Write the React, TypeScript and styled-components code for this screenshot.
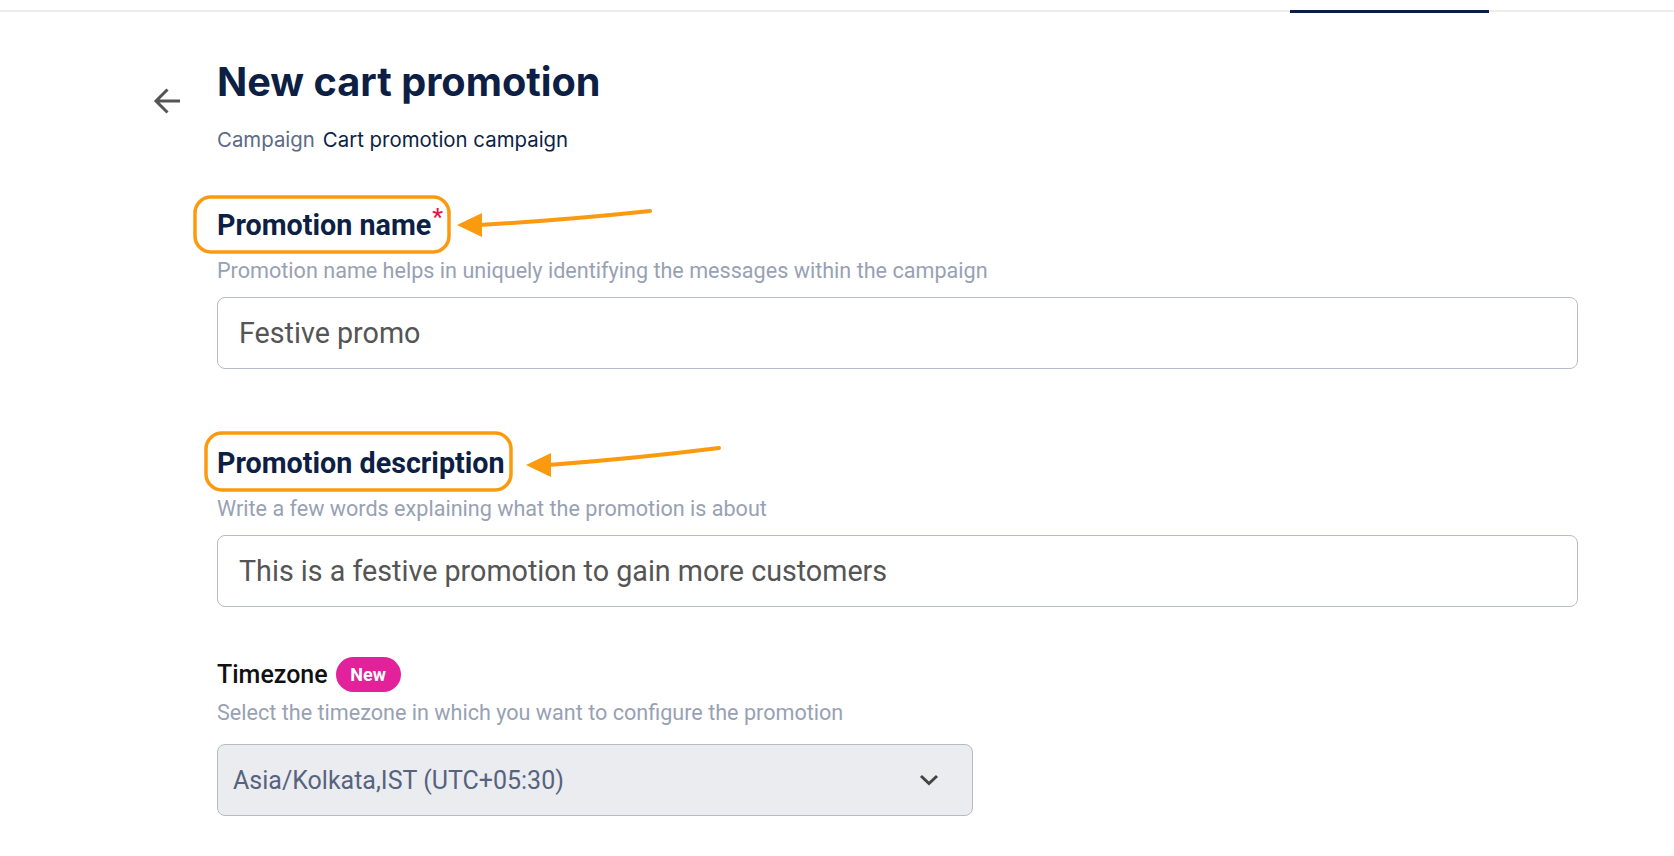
import React from 'react'
import styled, { createGlobalStyle } from 'styled-components'

const GlobalStyle = createGlobalStyle`
  html, body {
    margin: 0;
    padding: 0;
    background: #ffffff;
  }
  body {
    font-family: Roboto, 'Liberation Sans', sans-serif;
    color: #0e1f45;
  }
  * {
    box-sizing: border-box;
  }
`

const TabBar = styled.div`
  display: flex;
  height: 12px;
  border-bottom: 2px solid #ececec;
`
const TabIndicator = styled.div`
  margin-left: 1290px;
  width: 199px;
  height: 3px;
  margin-top: 10px;
  background: #0b1f45;
`

const Page = styled.div`
  display: flex;
  padding-left: 153px;
`
const BackColumn = styled.div`
  width: 64px;
  padding-top: 75px;
`
const BackButton = styled.button`
  display: flex;
  padding: 0;
  border: none;
  background: none;
  cursor: pointer;
  color: #555555;
`
const Content = styled.div`
  width: 1361px;
  display: flex;
  flex-direction: column;
  align-items: flex-start;
`
const Title = styled.h1`
  margin: 47px 0 0;
  font-family: Inter, Roboto, sans-serif;
  font-size: 39.7px;
  line-height: 46px;
  font-weight: 700;
  color: #0e1f45;
`
const Breadcrumb = styled.div`
  margin-top: 23px;
  display: flex;
  gap: 8px;
  font-family: Inter, Roboto, sans-serif;
  font-size: 20.4px;
  line-height: 24px;
`
const Crumb = styled.span<{ $muted?: boolean }>`
  color: ${(p) => (p.$muted ? '#5c6a87' : '#0e1f45')};
`

const Field = styled.div<{ $gap: number }>`
  margin-top: ${(p) => p.$gap}px;
  width: 100%;
  display: flex;
  flex-direction: column;
  align-items: flex-start;
`
const Label = styled.label`
  position: relative;
  font-size: 28.7px;
  line-height: 34px;
  font-weight: 700;
  color: #0e1f45;
`
const Required = styled.sup`
  position: relative;
  top: -3px;
  color: #e5184f;
  font-size: 24px;
  font-weight: 500;
  vertical-align: top;
  line-height: 24px;
  margin-left: 1px;
`
const Annotation = styled.svg`
  position: absolute;
  left: -30px;
  top: -20px;
  overflow: visible;
  pointer-events: none;
`
const Help = styled.div<{ $gap?: number }>`
  margin-top: ${(p) => p.$gap ?? 16}px;
  font-size: 21.6px;
  line-height: 25px;
  color: #98a1b3;
`
const TextInput = styled.input`
  margin-top: 14px;
  width: 100%;
  height: 72px;
  padding: 0 21px;
  border: 1px solid #b8bcc8;
  border-radius: 8px;
  font-family: Roboto, sans-serif;
  font-size: 28.7px;
  color: #555555;
  background: #ffffff;
  outline: none;
`
const LabelRow = styled.div`
  display: flex;
  align-items: center;
  gap: 8px;
  height: 35px;
`
const PlainLabel = styled.span`
  font-size: 25px;
  font-weight: 500;
  color: #111111;
`
const Badge = styled.span`
  display: inline-flex;
  align-items: center;
  justify-content: center;
  width: 65px;
  height: 35px;
  border-radius: 18px;
  background: #e2219a;
  color: #ffffff;
  font-size: 18px;
  font-weight: 700;
`
const Select = styled.div`
  margin-top: 19px;
  width: 756px;
  height: 72px;
  display: flex;
  align-items: center;
  justify-content: space-between;
  padding: 0 33px 0 15px;
  border: 1px solid #b6bac6;
  border-radius: 8px;
  background: #ebecf0;
  font-size: 25px;
  color: #56637f;
`

const ArrowBack = () => (
  <svg width="28" height="28" viewBox="0 0 28 28" fill="none">
    <path d="M27 14H3M14.5 2.5L3 14l11.5 11.5" stroke="currentColor" strokeWidth="3" />
  </svg>
)

const Chevron = () => (
  <svg width="20" height="12" viewBox="0 0 20 12" fill="none">
    <path d="M2 2l8 7.5L18 2" stroke="#444444" strokeWidth="3" />
  </svg>
)

interface IMarkProps {
  box: { x: number; y: number; w: number; h: number }
  tip: { x: number; y: number }
  tail: { x: number; y: number }
}

// orange highlight + arrow drawn over the screenshot
const Mark = ({ box, tip, tail }: IMarkProps) => {
  const baseX = tip.x + 25
  const midX = (baseX + tail.x) / 2
  const midY = (tip.y + tail.y) / 2 + 2
  return (
    <Annotation width="600" height="90">
      <rect x={box.x} y={box.y} width={box.w} height={box.h} rx="16" fill="none" stroke="#fb9a0f" strokeWidth="3.5" />
      <path d={`M${baseX - 3} ${tip.y} Q${midX} ${midY} ${tail.x} ${tail.y}`} fill="none" stroke="#fb9a0f" strokeWidth="4" strokeLinecap="round" />
      <polygon points={`${tip.x},${tip.y} ${baseX},${tip.y - 12} ${baseX},${tip.y + 12}`} fill="#fb9a0f" />
    </Annotation>
  )
}

const App = () => (
  <>
    <GlobalStyle />
    <TabBar>
      <TabIndicator />
    </TabBar>
    <Page>
      <BackColumn>
        <BackButton aria-label="Back">
          <ArrowBack />
        </BackButton>
      </BackColumn>
      <Content>
        <Title>New cart promotion</Title>
        <Breadcrumb>
          <Crumb $muted>Campaign</Crumb>
          <Crumb>Cart promotion campaign</Crumb>
        </Breadcrumb>

        <Field $gap={56}>
          <Label>
            Promotion name<Required>*</Required>
            <Mark box={{ x: 8, y: 9, w: 254, h: 55 }} tip={{ x: 270, y: 37 }} tail={{ x: 463, y: 23 }} />
          </Label>
          <Help>Promotion name helps in uniquely identifying the messages within the campaign</Help>
          <TextInput defaultValue="Festive promo" />
        </Field>

        <Field $gap={77}>
          <Label>
            Promotion description
            <Mark box={{ x: 19, y: 7, w: 305, h: 57 }} tip={{ x: 339, y: 39 }} tail={{ x: 532, y: 22 }} />
          </Label>
          <Help>Write a few words explaining what the promotion is about</Help>
          <TextInput defaultValue="This is a festive promotion to gain more customers" />
        </Field>

        <Field $gap={50}>
          <LabelRow>
            <PlainLabel>Timezone</PlainLabel>
            <Badge>New</Badge>
          </LabelRow>
          <Help $gap={8}>Select the timezone in which you want to configure the promotion</Help>
          <Select>
            <span>Asia/Kolkata,IST (UTC+05:30)</span>
            <Chevron />
          </Select>
        </Field>
      </Content>
    </Page>
  </>
)

export default App
